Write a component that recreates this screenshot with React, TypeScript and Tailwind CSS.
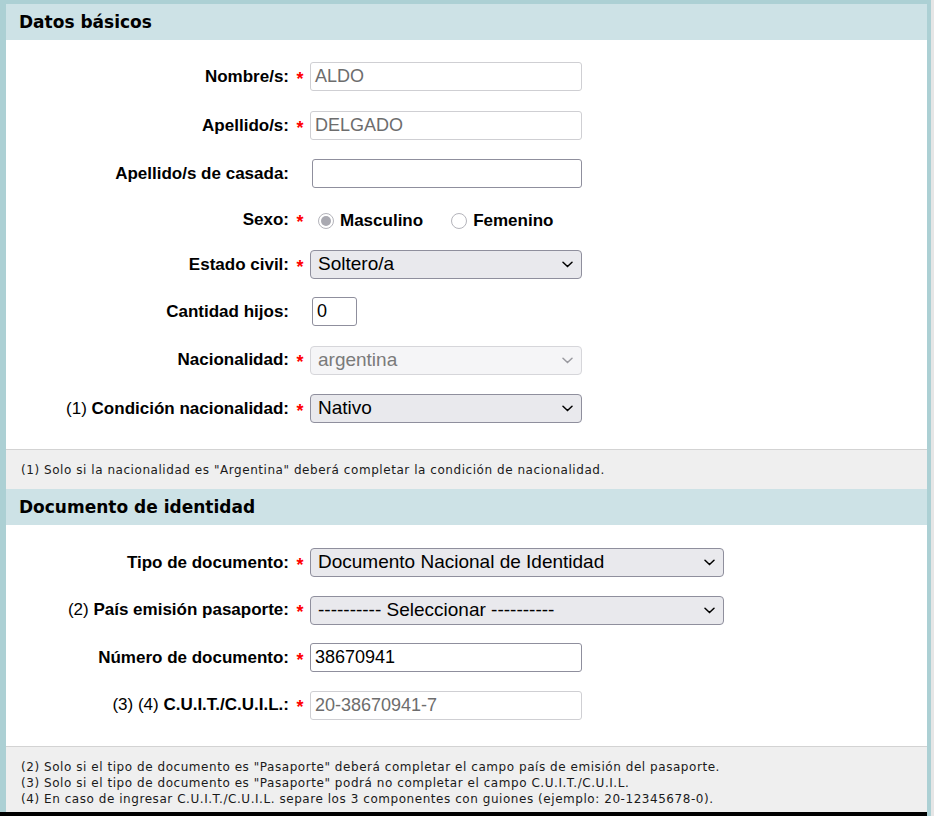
import React from "react";

const Chevron = ({ color = "#000" }: { color?: string }) => (
  <svg width="11" height="7" viewBox="0 0 11 7">
    <path d="M1 1.2l4.5 4.3L10 1.2" fill="none" stroke={color} strokeWidth="1.5" strokeLinecap="round" />
  </svg>
);

const Label = ({ prefix, text, req = true }: { prefix?: string; text: string; req?: boolean }) => (
  <>
    <div className="w-[284px] pr-[1px] text-right text-[17px] text-black">
      {prefix && <span className="font-normal">{prefix} </span>}
      <span className="font-bold">{text}</span>
    </div>
    <div className="w-[20px] text-center text-[18px] font-bold text-[#ff0000] leading-none mt-[4px]">{req ? "*" : ""}</div>
  </>
);

const Input = ({ value, readOnly, w = "w-[272px]", extra = "" }: { value: string; readOnly?: boolean; w?: string; extra?: string }) => (
  <div
    className={`${w} ${extra} h-[29px] flex items-center rounded-[3px] border pl-[4px] text-[18px] ${
      readOnly ? "border-[#cfcfd3] text-[#6d6d6d]" : "border-[#8f8f9d] text-black"
    }`}
  >
    {value}
  </div>
);

const Select = ({ value, disabled, w = "w-[272px]" }: { value: string; disabled?: boolean; w?: string }) => (
  <div
    className={`${w} h-[29px] flex items-center justify-between rounded-[4px] border pl-[7px] pr-[8px] text-[19px] ${
      disabled ? "bg-[#f5f5f7] border-[#d6d6da] text-[#7a7a7a]" : "bg-[#e9e9ed] border-[#8f8f9d] text-black"
    }`}
  >
    <span>{value}</span>
    <Chevron color={disabled ? "#9a9aa0" : "#000"} />
  </div>
);

const Row = ({ h, children }: { h: string; children: React.ReactNode }) => (
  <div className={`${h} flex items-center`}>{children}</div>
);

const Header = ({ title }: { title: string }) => (
  <div
    className="h-[36px] flex items-center bg-[#cde2e6] pl-[13px] pt-[1px] text-[17px] font-bold text-black"
    style={{ fontFamily: '"DejaVu Sans", Verdana, sans-serif' }}
  >
    {title}
  </div>
);

const Note = ({ lines, className }: { lines: string[]; className: string }) => (
  <div
    className={`${className} border-t border-[#d3d3d3] bg-[#efefef] pl-[15px] text-[12px] tracking-[0.55px] leading-[16px] text-[#1a1a1a]`}
    style={{ fontFamily: '"DejaVu Sans", Verdana, sans-serif' }}
  >
    {lines.map((l) => (
      <div key={l}>{l}</div>
    ))}
  </div>
);

export default function App() {
  return (
    <div className="h-[816px] w-[934px] overflow-hidden bg-[#e6e6e6]" style={{ fontFamily: '"Liberation Sans", Arial, sans-serif' }}>
      <div className="w-[931px] h-[816px] border-r-4 border-[#acd0d4] flex flex-col">
        <div className="flex-1 border-l-[6px] border-t-4 border-[#acd0d4] bg-white flex flex-col">
          <Header title="Datos básicos" />
          <div className="pt-[12px] pb-[16px]">
            <Row h="h-[49px]">
              <Label text="Nombre/s:" />
              <Input value="ALDO" readOnly />
            </Row>
            <Row h="h-[49px]">
              <Label text="Apellido/s:" />
              <Input value="DELGADO" readOnly />
            </Row>
            <Row h="h-[47px]">
              <Label text="Apellido/s de casada:" req={false} />
              <Input value="" w="w-[270px]" extra="ml-[2px]" />
            </Row>
            <Row h="h-[45px]">
              <Label text="Sexo:" />
              <div className="flex items-center pt-[3px] text-[17px] font-bold text-black">
                <span className="ml-[8px] w-[16px] h-[16px] rounded-full border border-[#b4b4bb] bg-white flex items-center justify-center">
                  <span className="w-[10px] h-[10px] rounded-full bg-[#a9a9b1]" />
                </span>
                <span className="ml-[6px]">Masculino</span>
                <span className="ml-[28px] w-[16px] h-[16px] rounded-full border border-[#b4b4bb] bg-white" />
                <span className="ml-[6px]">Femenino</span>
              </div>
            </Row>
            <Row h="h-[45px]">
              <Label text="Estado civil:" />
              <Select value="Soltero/a" />
            </Row>
            <Row h="h-[49px]">
              <Label text="Cantidad hijos:" req={false} />
              <Input value="0" w="w-[45px]" extra="ml-[2px]" />
            </Row>
            <Row h="h-[48px]">
              <Label text="Nacionalidad:" />
              <Select value="argentina" disabled />
            </Row>
            <Row h="h-[49px]">
              <Label prefix="(1)" text="Condición nacionalidad:" />
              <Select value="Nativo" />
            </Row>
          </div>
          <Note
            className="h-[40px] pt-[12px]"
            lines={['(1) Solo si la nacionalidad es "Argentina" deberá completar la condición de nacionalidad.']}
          />
          <Header title="Documento de identidad" />
          <div className="pt-[14px] pb-[17px]">
            <Row h="h-[47px]">
              <Label text="Tipo de documento:" />
              <Select value="Documento Nacional de Identidad" w="w-[414px]" />
            </Row>
            <Row h="h-[48px]">
              <Label prefix="(2)" text="País emisión pasaporte:" />
              <Select value="---------- Seleccionar ----------" w="w-[414px]" />
            </Row>
            <Row h="h-[47px]">
              <Label text="Número de documento:" />
              <Input value="38670941" />
            </Row>
            <Row h="h-[48px]">
              <Label prefix="(3) (4)" text="C.U.I.T./C.U.I.L.:" />
              <Input value="20-38670941-7" readOnly />
            </Row>
          </div>
          <Note
            className="flex-1 pt-[12px]"
            lines={[
              '(2) Solo si el tipo de documento es "Pasaporte" deberá completar el campo país de emisión del pasaporte.',
              '(3) Solo si el tipo de documento es "Pasaporte" podrá no completar el campo C.U.I.T./C.U.I.L.',
              "(4) En caso de ingresar C.U.I.T./C.U.I.L. separe los 3 componentes con guiones (ejemplo: 20-12345678-0).",
            ]}
          />
        </div>
        <div className="h-[4px] bg-black" />
      </div>
    </div>
  );
}
